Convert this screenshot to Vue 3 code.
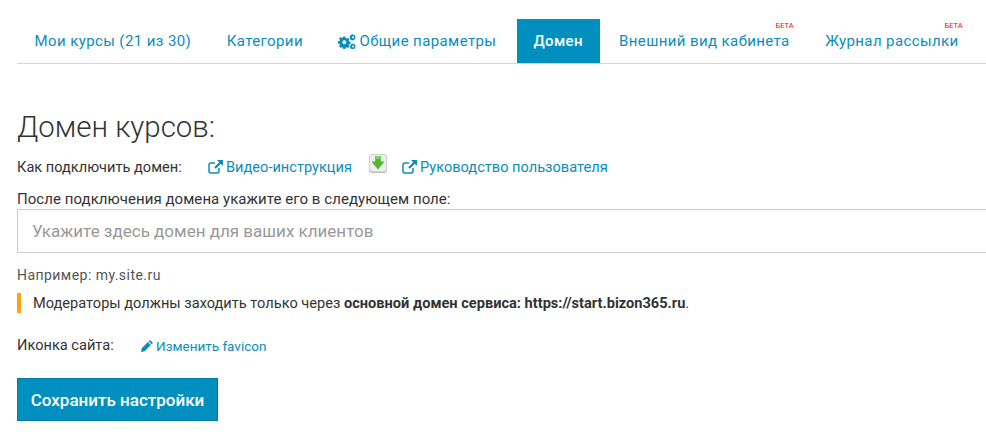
<script setup>
const tabs = [
  { label: 'Мои курсы (21 из 30)' },
  { label: 'Категории' },
  { label: 'Общие параметры', gear: true },
  { label: 'Домен', active: true },
  { label: 'Внешний вид кабинета', beta: true },
  { label: 'Журнал рассылки', beta: true },
]
</script>

<template>
  <div class="page">
    <nav class="tabs">
      <a v-for="t in tabs" :key="t.label" class="tab" :class="{ active: t.active }">
        <svg v-if="t.gear" class="gear" viewBox="0 0 18 15" width="18" height="15">
          <g fill="#0b8dbb">
            <path fill-rule="evenodd" d="M5.200 2.600h2.200l.3 1.500 1 .4 1.300-.8 1.500 1.500-.8 1.300.4 1 1.500.3v2.200l-1.500.3-.4 1 .8 1.300-1.500 1.500-1.300-.8-1 .4-.3 1.500H5.200l-.3-1.500-1-.4-1.300.8L1.100 12l.8-1.300-.4-1L0 9.400V7.200l1.500-.3.4-1-.8-1.300 1.500-1.500 1.300.8 1-.4zM6.300 6.300a2 2 0 1 0 0 4 2 2 0 0 0 0-4z" />
            <path fill-rule="evenodd" d="M15 0l.4.900 1-.1.300 1 .9.500-.4.900.5.800-.8.600v1l-1 .2-.6.800-.9-.4-.9.300-.5-.8-1-.3.100-1-.7-.7.600-.8-.3-.9.900-.4.300-1 1 .1zm0 2.200a1.100 1.100 0 1 0 0 2.200 1.100 1.100 0 0 0 0-2.200z" />
            <path fill-rule="evenodd" d="M15 9.300l.4.800 1-.1.300 1 .9.500-.4.900.4.800-.7.600v.7l-1 .2-.6.400H14l-.6-.4-1-.2V13.800l-.6-.7.5-.8-.3-.9.900-.4.300-1 1 .1zm0 2.100a1 1 0 1 0 0 2 1 1 0 0 0 0-2z" />
          </g>
        </svg>
        {{ t.label }}
        <span v-if="t.beta" class="beta">БЕТА</span>
      </a>
    </nav>

    <h1 class="title">Домен курсов:</h1>

    <div class="howto">
      <span class="howto-label">Как подключить домен:</span>
      <a class="link video">
        <svg class="ext" viewBox="0 0 15 14" width="15" height="14">
          <path fill="none" stroke="#0b8dbb" stroke-width="1.500" d="M11 8v3a2 2 0 0 1-2 2H3a2 2 0 0 1-2-2V5a2 2 0 0 1 2-2h4" />
          <path fill="#0b8dbb" d="M9 0h6v6l-2.200-2.200-5 5-1.600-1.600 5-5z" />
        </svg>
        Видео-инструкция
      </a>
      <span class="dl">
        <svg viewBox="0 0 14 14" width="14" height="14">
          <path fill="#4fb82e" d="M4.200 0h5.600v5.500H13.500L7 13.500.5 5.500h3.700z" />
          <path fill="#86d968" d="M5.200 0h3.600v3H5.200z" />
        </svg>
      </span>
      <a class="link">
        <svg class="ext" viewBox="0 0 15 14" width="15" height="14">
          <path fill="none" stroke="#0b8dbb" stroke-width="1.500" d="M11 8v3a2 2 0 0 1-2 2H3a2 2 0 0 1-2-2V5a2 2 0 0 1 2-2h4" />
          <path fill="#0b8dbb" d="M9 0h6v6l-2.200-2.200-5 5-1.600-1.600 5-5z" />
        </svg>
        Руководство пользователя
      </a>
    </div>

    <label class="field-label" for="domain">После подключения домена укажите его в следующем поле:</label>
    <input id="domain" class="field" type="text" placeholder="Укажите здесь домен для ваших клиентов" />
    <p class="hint">Например: my.site.ru</p>

    <p class="notice">Модераторы должны заходить только через <b>основной домен сервиса: https://start.bizon365.ru</b>.</p>

    <div class="favicon">
      <span class="favicon-label">Иконка сайта:</span>
      <a class="link small">
        <svg viewBox="0 0 13 13" width="12" height="12">
          <path fill="#0b8dbb" d="M9.800 0L13 3.200l-1.500 1.500-3.200-3.200zM7.500 2.300l3.200 3.200-6.700 6.700L0 13l.8-4z" />
        </svg>
        Изменить favicon
      </a>
    </div>

    <button class="save" type="button">Сохранить настройки</button>
  </div>
</template>

<style scoped>
.page {
  box-sizing: border-box;
  width: 986px;
  height: 439px;
  overflow: hidden;
  padding: 19px 0 0 17px;
  font-family: Roboto, sans-serif;
  font-size: 14.600px;
  color: #333;
  background: #fff;
}
.tabs {
  display: flex;
  height: 44px;
  border-bottom: 1px solid #d4d4d4;
  box-sizing: content-box;
}
.tab {
  position: relative;
  display: flex;
  align-items: center;
  gap: 3px;
  padding: 0 18px 0 17.500px;
  font-size: 15px;
  letter-spacing: 0.400px;
  color: #0b8dbb;
  white-space: nowrap;
}
.tab.active {
  padding: 0 16.500px;
  margin: 0 2px 0 2.500px;
  background: #008fbe;
  color: #fff;
  font-weight: 500;
}
.beta {
  position: absolute;
  top: 2px;
  right: 14px;
  font-size: 7.500px;
  letter-spacing: 0;
  color: #f00;
}
.title {
  margin: 44px 0 0;
  font-size: 29.400px;
  line-height: 38px;
  font-weight: 300;
  color: #333;
}
.howto {
  display: flex;
  align-items: center;
  height: 22px;
  margin-top: 10px;
}
.howto-label {
  width: 191px;
}
.link {
  display: inline-flex;
  align-items: center;
  gap: 3px;
  color: #0b8dbb;
  font-size: 14.600px;
}
.dl {
  display: flex;
  align-items: center;
  justify-content: center;
  box-sizing: border-box;
  width: 18px;
  height: 18px;
  margin: -9px 15px 0 17px;
  border: 1px solid #cfcfcf;
  border-radius: 3px;
  background: #eee;
  box-shadow: 0 1px 1px #bbb;
}
.field-label {
  display: block;
  margin-top: 12px;
  font-size: 15px;
  letter-spacing: 0.050px;
  line-height: 19px;
  color: #333;
}
.field {
  display: block;
  box-sizing: border-box;
  width: 100%;
  height: 44px;
  padding: 0 14px;
  border: 1px solid #ccc;
  border-right: 0;
  outline: 0;
  font-family: Roboto, sans-serif;
  font-size: 17px;
  color: #333;
}
.field::placeholder {
  color: #999;
  opacity: 1;
}
.hint {
  margin: 14px 0 0;
  font-size: 14px;
  letter-spacing: 0.450px;
  line-height: 17px;
  color: #555;
}
.notice {
  margin: 9px 0 0;
  padding-left: 12px;
  border-left: 4px solid #fca60a;
  line-height: 20px;
  color: #333;
}
.favicon {
  display: flex;
  align-items: center;
  height: 20px;
  margin-top: 22px;
}
.favicon-label {
  width: 124px;
}
.small {
  font-size: 13.500px;
  gap: 3px;
  margin-top: 2px;
}
.save {
  display: block;
  box-sizing: border-box;
  width: 201px;
  height: 43px;
  margin-top: 23px;
  padding: 0;
  border: 1px solid #007ba4;
  background: #008fbe;
  color: #fff;
  font-family: Roboto, sans-serif;
  font-size: 17px;
  font-weight: 500;
}
</style>
